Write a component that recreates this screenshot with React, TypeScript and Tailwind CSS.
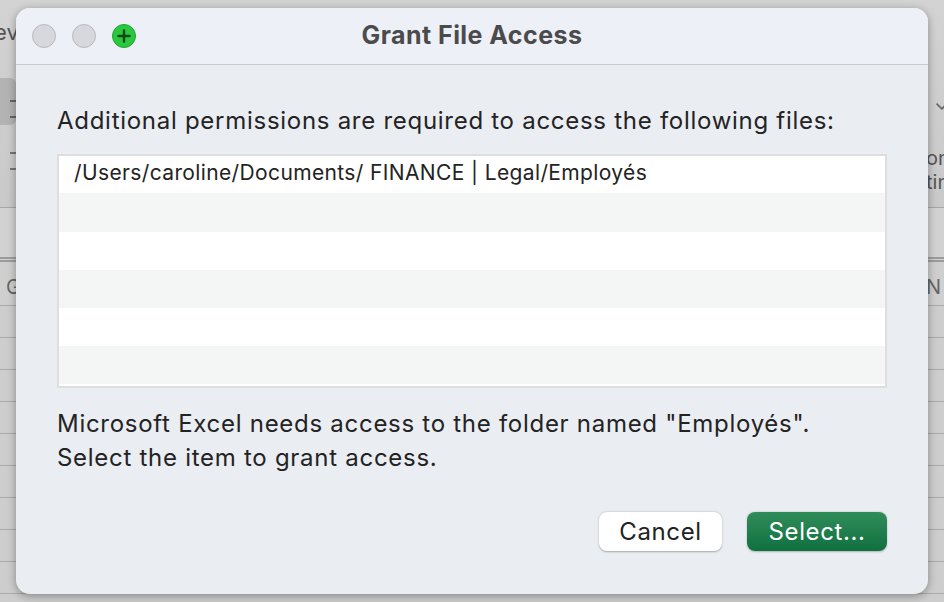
import React from "react";

const font = { fontFamily: "Inter, 'Noto Sans', 'Liberation Sans', sans-serif" };

function GridRow() {
  const cols = [81, 130, 130, 130, 130, 130, 130, 83];
  return (
    <div className="flex h-[32px] border-b border-[#a9a9a9]">
      {cols.map((w, i) => (
        <div
          key={i}
          style={{ width: w }}
          className={`shrink-0 ${i < cols.length - 1 ? "border-r border-[#a9a9a9]" : ""}`}
        />
      ))}
    </div>
  );
}

export default function App() {
  return (
    <div className="relative w-[944px] h-[602px] overflow-hidden bg-[#cdcdcd]" style={font}>
      {/* Background Excel window */}
      <div className="flex flex-col w-full h-full">
        <div className="relative h-[208px] bg-gradient-to-b from-[#d3d3d3] to-[#c9c9c9] border-b border-[#a8a8a8] overflow-hidden">
          <div className="absolute left-[-6px] top-[16px] text-[22px] text-[#555]">ev</div>
          <div className="absolute left-[-10px] top-[78px] w-[26px] h-[47px] rounded-[6px] bg-[#b3b3b3]" />
          <div className="absolute left-[10px] top-[100px] w-[6px] h-[2px] bg-[#666]" />
          <div className="absolute left-[10px] top-[116px] w-[6px] h-[2px] bg-[#666]" />
          <div className="absolute left-[10px] top-[152px] w-[6px] h-[2px] bg-[#777]" />
          <div className="absolute left-[10px] top-[168px] w-[6px] h-[2px] bg-[#777]" />
          <div className="absolute left-[934px] top-[88px] text-[20px] text-[#666]">⌄</div>
          <div className="absolute left-[926px] top-[146px] text-[20px] leading-[24px] text-[#555]">on<br />tin</div>
        </div>
        <div className="h-[54px] bg-[#d2d2d2] border-b-[5px] border-double border-[#9c9c9c]" />
        <div className="relative h-[44px] bg-[#cfcfcf] border-b border-[#a9a9a9] overflow-hidden">
          <div className="absolute left-[6px] top-[10px] text-[20px] text-[#666]">G</div>
          <div className="absolute left-[926px] top-[10px] text-[20px] text-[#666]">N</div>
        </div>
        <GridRow />
        <GridRow />
        <GridRow />
        <GridRow />
        <GridRow />
        <GridRow />
        <GridRow />
        <GridRow />
        <GridRow />
      </div>

      {/* Dialog sheet */}
      <div className="absolute left-[16px] top-[8px] w-[912px] h-[586px] rounded-[14px] bg-[#eaedf2] shadow-[0_2px_8px_rgba(0,0,0,0.35)] overflow-hidden flex flex-col">
        <div className="relative h-[57px] shrink-0 bg-[#eef0f7] border-b border-[#c8cacf] flex items-center justify-center">
          <div className="absolute left-[16px] top-[16px] flex gap-[16px]">
            <div className="w-[24px] h-[24px] rounded-full bg-[#d6d8de] border border-[#b8bac0]" />
            <div className="w-[24px] h-[24px] rounded-full bg-[#d6d8de] border border-[#b8bac0]" />
            <div className="w-[24px] h-[24px] rounded-full bg-[#2bc740] border border-[#1fa52f] flex items-center justify-center">
              <svg width="16" height="16" viewBox="0 0 16 16">
                <path d="M8 2.5V13.5M2.5 8H13.5" stroke="#0b4a12" strokeWidth="2.4" strokeLinecap="round" />
              </svg>
            </div>
          </div>
          <div className="text-[25px] font-bold text-[#4b4b4b] tracking-[0.45px] pb-[1px]">Grant File Access</div>
        </div>

        <div className="flex flex-col px-[41px] pt-[43px] text-[24px] tracking-[0.72px] text-[#232323]">
          <div className="leading-[26px] whitespace-nowrap">
            Additional permissions are required to access the following files:
          </div>
          <div className="mt-[20px] h-[234px] border-2 border-[#dedede] bg-white flex flex-col">
            <div className="h-[37px] bg-white flex items-center pl-[15px] pb-[3px] text-[21px] tracking-[0.37px] whitespace-nowrap">
              /Users/caroline/Documents/ FINANCE | Legal/Employés
            </div>
            <div className="h-[39px] bg-[#f4f5f5]" />
            <div className="h-[38px] bg-white" />
            <div className="h-[38px] bg-[#f4f5f5]" />
            <div className="h-[38px] bg-white" />
            <div className="h-[38px] bg-[#f4f5f5]" />
          </div>
          <div className="mt-[19px] leading-[34px] whitespace-nowrap">
            Microsoft Excel needs access to the folder named "Employés".
            <br />
            Select the item to grant access.
          </div>
          <div className="mt-[37px] flex justify-end gap-[25px]">
            <button className="w-[123px] h-[39px] rounded-[8px] bg-white shadow-[0_0.5px_2px_rgba(0,0,0,0.3)] text-[#222] tracking-[0.6px]">
              Cancel
            </button>
            <button className="w-[140px] h-[39px] rounded-[8px] bg-gradient-to-b from-[#2f8d5a] to-[#0f7040] shadow-[0_0.5px_2px_rgba(0,0,0,0.25)] text-white tracking-[0.6px]">
              Select...
            </button>
          </div>
        </div>
      </div>
    </div>
  );
}
